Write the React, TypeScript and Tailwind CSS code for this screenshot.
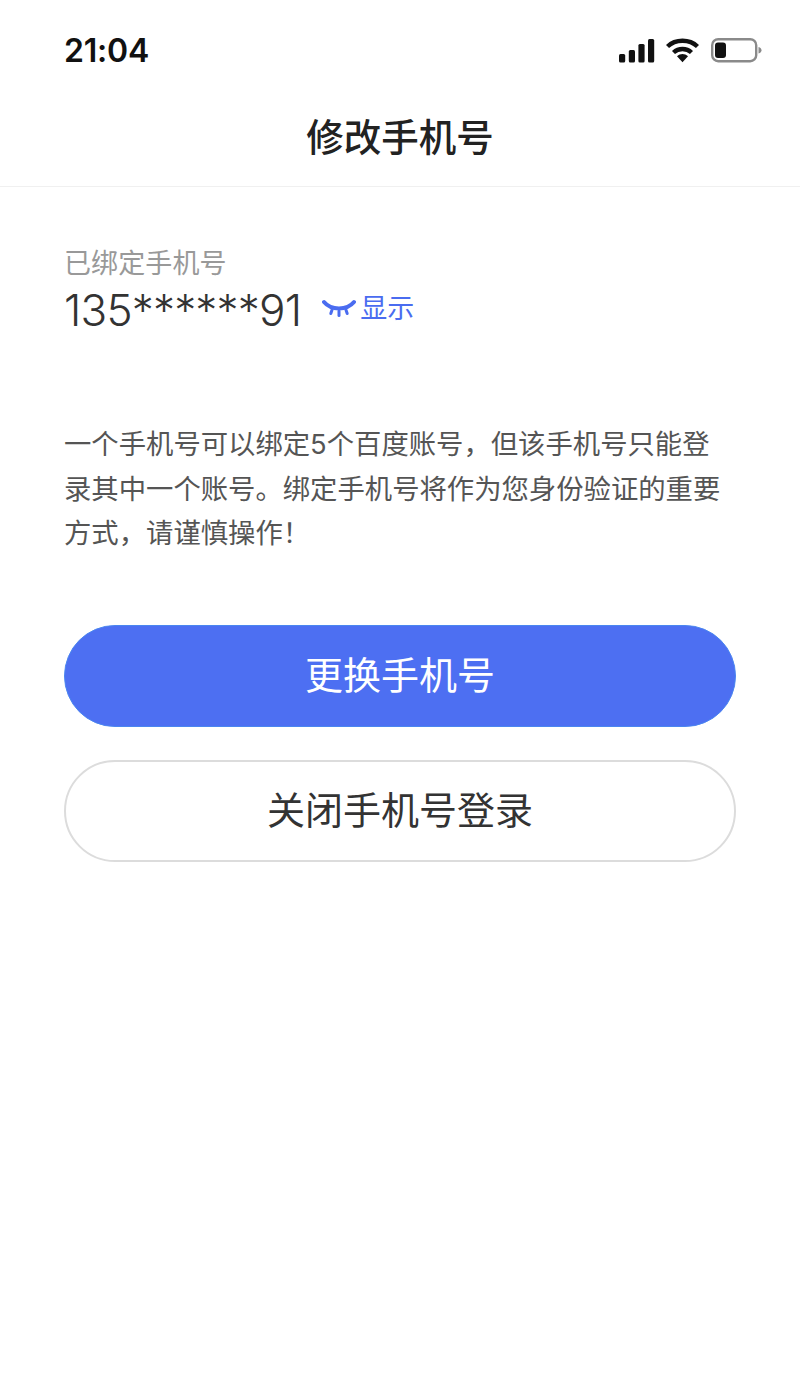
const cjk = "font-['Inter','Noto_Sans_CJK_SC',sans-serif]"

function Signal() {
  return (
    <svg width="36" height="24" viewBox="0 0 36 24" fill="#111">
      <rect x="0" y="15" width="6.2" height="8.5" rx="1.5" />
      <rect x="9.8" y="11" width="6.2" height="12.5" rx="1.5" />
      <rect x="19.4" y="5" width="6.2" height="18.5" rx="1.5" />
      <rect x="29" y="0" width="6.2" height="23.5" rx="1.5" />
    </svg>
  )
}

function Wifi() {
  return (
    <svg width="33" height="25" viewBox="0 0 33 25" fill="none" stroke="#111" strokeWidth="4.4">
      <path d="M1.5 8.5 C9.5 0.8 23.5 0.8 31.5 8.5" />
      <path d="M7.5 14.5 C12.5 9.8 20.5 9.8 25.5 14.5" />
      <path d="M11 18.3 L16.5 24.2 L22 18.3 C18.5 15.2 14.5 15.2 11 18.3Z" fill="#111" stroke="none" />
    </svg>
  )
}

function Battery() {
  return (
    <svg width="51" height="25" viewBox="0 0 51 25" fill="none">
      <rect x="1.2" y="1.2" width="44" height="22" rx="6" stroke="#8a8a8a" strokeWidth="2.4" />
      <rect x="4" y="4.5" width="11" height="15.5" rx="3" fill="#111" />
      <path d="M47.5 9 C49.5 9.5 50.5 10.8 50.5 12.2 C50.5 13.6 49.5 15 47.5 15.5Z" fill="#8a8a8a" />
    </svg>
  )
}

function ClosedEye() {
  return (
    <svg width="34" height="20" viewBox="0 0 34 20" fill="none" stroke="#4a6cf0" strokeLinecap="round">
      <path d="M2 3 C9 11.5 25 11.5 32 3" strokeWidth="4" />
      <path d="M10 11 L8.8 14.5" strokeWidth="3" />
      <path d="M17 12 L17 16.5" strokeWidth="3" />
      <path d="M24 11 L25.2 14.5" strokeWidth="3" />
    </svg>
  )
}

export default function App() {
  return (
    <div className={`w-[800px] h-[1384px] bg-white overflow-hidden ${cjk}`}>
      {/* Status bar */}
      <div className="h-[100px] pl-[64px] pr-[38px] pt-[31px] flex justify-between items-start">
        <span className="text-[32px] leading-[40px] font-semibold text-[#111] tracking-[-0.2px]">21:04</span>
        <div className="flex items-center pt-[7px] w-[143px]">
          <span className="flex w-[47px]"><Signal /></span>
          <span className="flex w-[45px]"><Wifi /></span>
          <Battery />
        </div>
      </div>

      {/* Nav */}
      <div className="h-[87px] border-b border-[#f0f0f0] flex justify-center pt-[13px]">
        <h1 className="text-[37.5px] leading-[50px] font-medium text-[#222]">修改手机号</h1>
      </div>

      <div className="px-[64px]">
        <p className="mt-[59px] text-[27px] leading-[36px] text-[#999] tracking-[0.1px]">已绑定手机号</p>
        <div className="flex items-center mt-[3px] h-[50px]">
          <span className="text-[44px] leading-[50px] font-light text-[#333] tracking-[-0.8px]">135******91</span>
          <span className="ml-[21px] mr-[4px] pb-[2px] flex"><ClosedEye /></span>
          <span className="pb-[2px] text-[27px] leading-[36px] text-[#4a6cf0]">显示</span>
        </div>

        <p className="mt-[88px] text-[27.35px] leading-[44.5px] text-[#555]">
          一个手机号可以绑定5个百度账号，但该手机号只能登
          <br />
          录其中一个账号。绑定手机号将作为您身份验证的重要
          <br />
          方式，请谨慎操作！
        </p>

        <div className="mt-[68px] flex flex-col gap-[33px]">
          <button className="h-[102px] rounded-full bg-[#4d6ff2] border border-[#4a86f0] text-white text-[38px]">更换手机号</button>
          <button className="h-[102px] rounded-full bg-white border-2 border-[#dcdcdc] text-[#333] text-[38px]">关闭手机号登录</button>
        </div>
      </div>
    </div>
  )
}
